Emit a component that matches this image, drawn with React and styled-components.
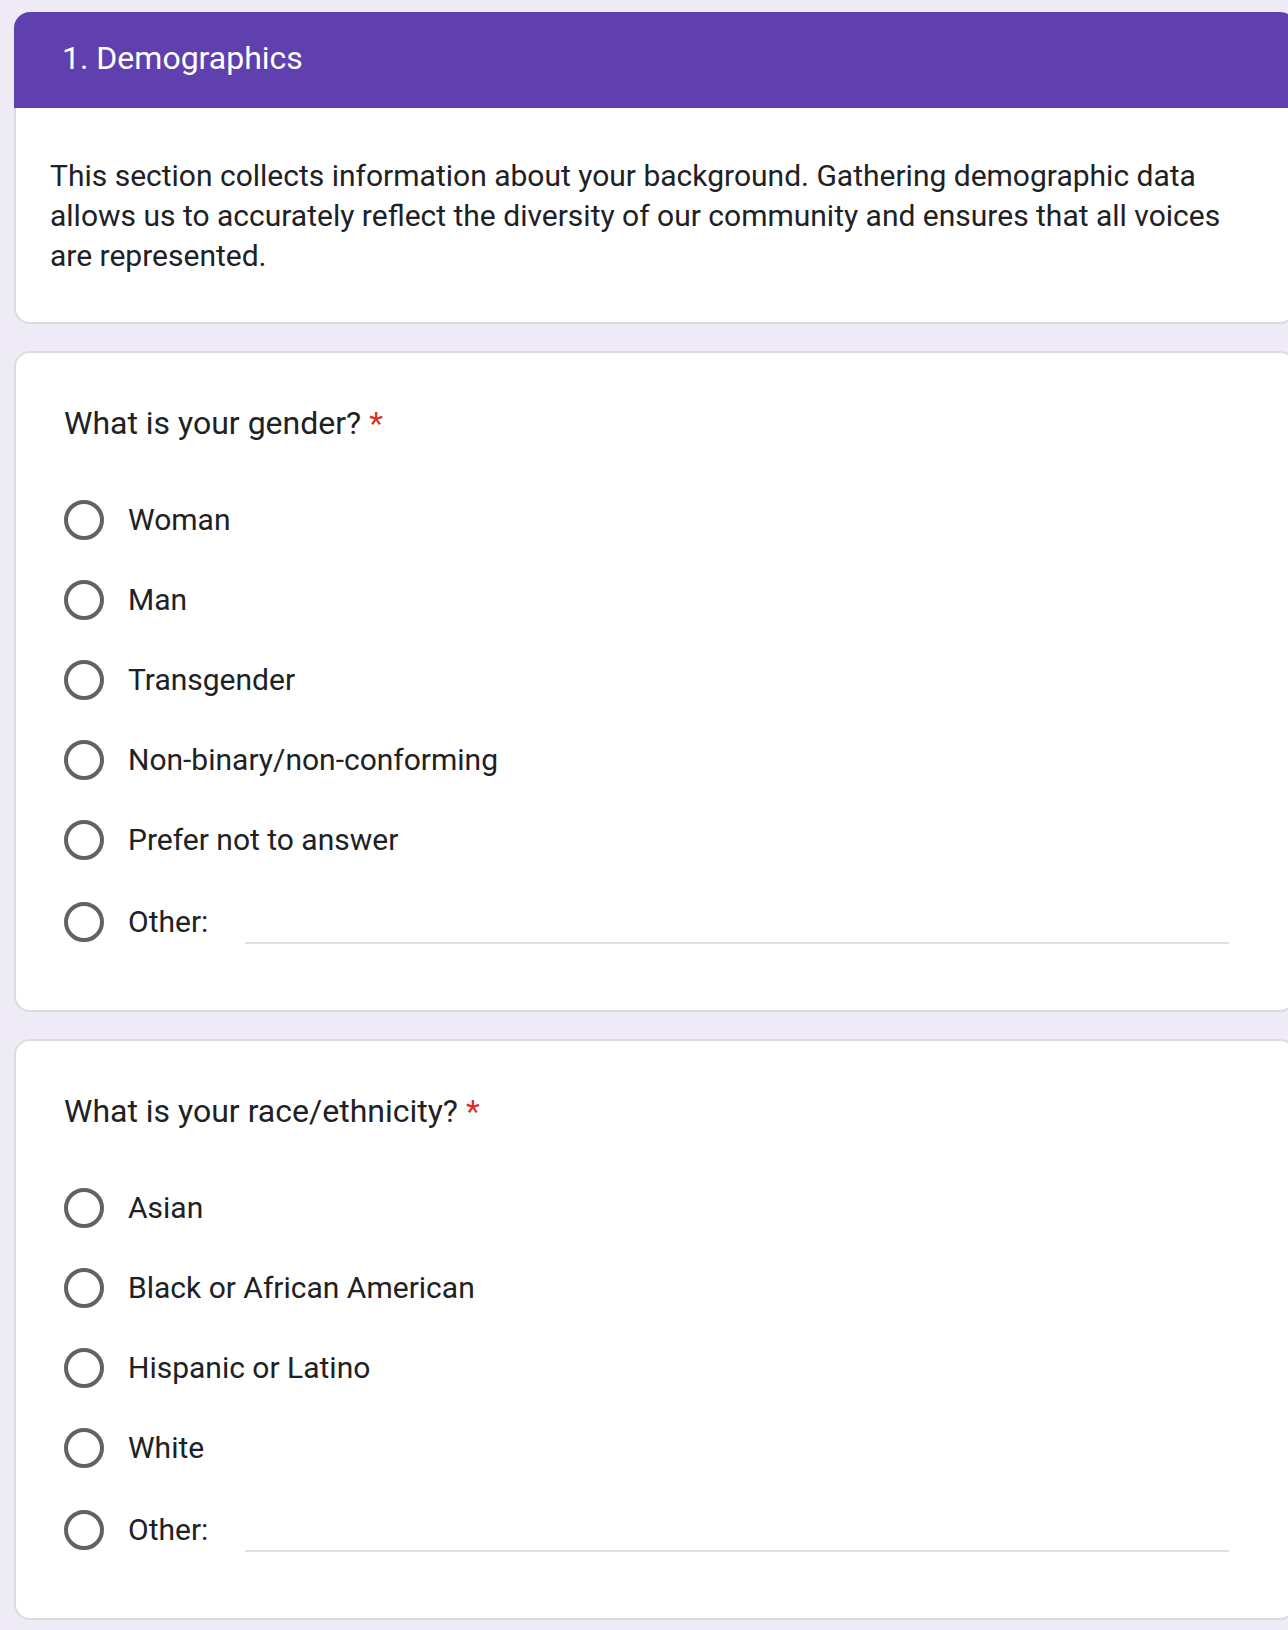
import React from "react";
import styled, { createGlobalStyle } from "styled-components";

const GlobalStyle = createGlobalStyle`
  html, body {
    margin: 0;
    padding: 0;
    background: #eeebf6;
    overflow-x: hidden;
  }
  body {
    font-family: Roboto, "Liberation Sans", Arial, sans-serif;
    color: #202124;
  }
  * { box-sizing: border-box; }
`;

const Page = styled.div`
  display: flex;
  flex-direction: column;
  gap: 27px;
  padding: 12px 0 10px 14px;
  width: 1296px;
`;

const Card = styled.section`
  width: 1282px;
  background: #ffffff;
  border: 2px solid #dadce0;
  border-radius: 16px;
`;

const SectionCard = styled.section`
  width: 1282px;
  display: flex;
  flex-direction: column;
`;

const SectionHeader = styled.div`
  height: 96px;
  background: #603fae;
  border-radius: 16px 16px 0 0;
  display: flex;
  align-items: center;
  padding-left: 48px;
  padding-bottom: 4px;
`;

const SectionTitle = styled.h1`
  margin: 0;
  font-size: 32px;
  font-weight: 400;
  color: #ffffff;
  line-height: 40px;
`;

const SectionBody = styled.div`
  background: #ffffff;
  border: 2px solid #dadce0;
  border-top: none;
  border-radius: 0 0 16px 16px;
  padding: 48px 50px 46px 34px;
`;

const Description = styled.p`
  margin: 0;
  font-size: 30px;
  line-height: 40px;
  color: #202124;
`;

const QuestionInner = styled.div`
  padding: 46px 48px 46px 48px;
  display: flex;
  flex-direction: column;
`;

const QuestionTitle = styled.h2`
  margin: 0 0 33px 0;
  font-size: 32px;
  font-weight: 400;
  line-height: 48px;
  color: #202124;
`;

const Required = styled.span`
  color: #d93025;
  margin-left: 8px;
`;

const OptionList = styled.div`
  display: flex;
  flex-direction: column;
`;

const OptionRow = styled.label`
  display: flex;
  align-items: center;
  height: ${(p) => (p.$other ? 84 : 80)}px;
  gap: 24px;
`;

const Radio = styled.span`
  flex: none;
  width: 40px;
  height: 40px;
  border: 4px solid #5f6368;
  border-radius: 50%;
`;

const OptionLabel = styled.span`
  font-size: 30px;
  line-height: 40px;
  color: #202124;
  white-space: nowrap;
`;

const OtherInput = styled.div`
  flex: 1;
  height: 44px;
  margin-left: 13px;
  margin-right: 17px;
  border-bottom: 2px solid #e0e0e0;
`;

const genderOptions = [
  "Woman",
  "Man",
  "Transgender",
  "Non-binary/non-conforming",
  "Prefer not to answer",
];

const raceOptions = [
  "Asian",
  "Black or African American",
  "Hispanic or Latino",
  "White",
];

function Question({ title, options }) {
  return (
    <Card>
      <QuestionInner>
        <QuestionTitle>
          {title}
          <Required>*</Required>
        </QuestionTitle>
        <OptionList>
          {options.map((o) => (
            <OptionRow key={o}>
              <Radio />
              <OptionLabel>{o}</OptionLabel>
            </OptionRow>
          ))}
          <OptionRow $other>
            <Radio />
            <OptionLabel>Other:</OptionLabel>
            <OtherInput />
          </OptionRow>
        </OptionList>
      </QuestionInner>
    </Card>
  );
}

export default function App() {
  return (
    <>
      <GlobalStyle />
      <Page>
        <SectionCard>
          <SectionHeader>
            <SectionTitle>1. Demographics</SectionTitle>
          </SectionHeader>
          <SectionBody>
            <Description>
              This section collects information about your background. Gathering
              demographic data allows us to accurately reflect the diversity of
              our community and ensures that all voices are represented.
            </Description>
          </SectionBody>
        </SectionCard>
        <Question title="What is your gender?" options={genderOptions} />
        <Question title="What is your race/ethnicity?" options={raceOptions} />
      </Page>
    </>
  );
}
